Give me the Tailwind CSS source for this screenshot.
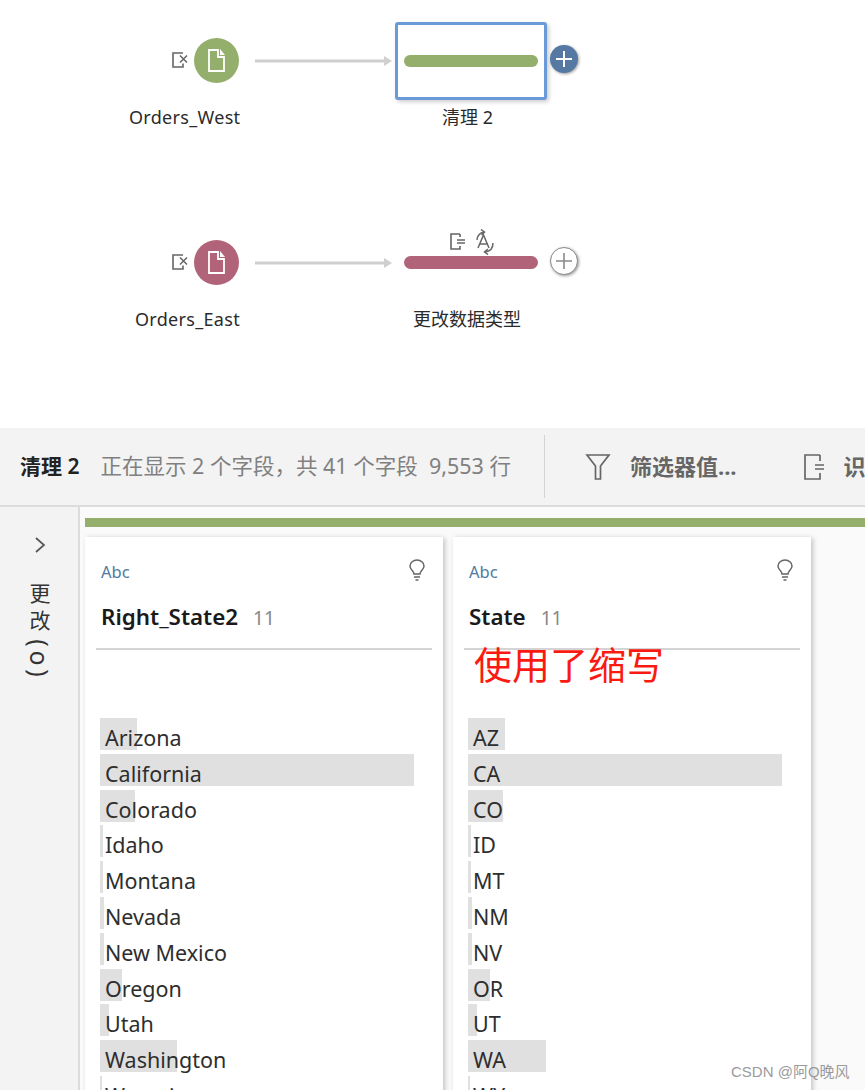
<!DOCTYPE html>
<html lang="zh">
<head>
<meta charset="utf-8">
<script src="https://cdn.jsdelivr.net/npm/@tailwindcss/browser@4"></script>
</head>
<body class="m-0 bg-white">
<div class="w-[865px] h-[1090px] overflow-hidden relative flex flex-col text-[#2b2b2b] font-['Noto_Sans','Noto_Sans_CJK_SC',sans-serif]">

  <!-- flow canvas -->
  <div class="relative h-[428px] shrink-0 bg-white">
    <svg class="absolute left-[170px] top-[50px] w-[20px] h-[20px]" viewBox="0 0 20 20" fill="none" stroke="#666" stroke-width="1.600"><path d="M13 3H3v14h10v-3.500"/><path d="M10 5.500l7 7M17 5.500l-7 7" stroke-width="1.500"/></svg>
    <div class="absolute left-[194px] top-[38px] w-[45px] h-[45px] rounded-full bg-[#94ae6c] flex items-center justify-center">
      <svg class="w-[19px] h-[25px]" viewBox="0 0 19 25" fill="none" stroke="#fff" stroke-width="1.800"><path d="M2 2h9v7h6v14H2z"/><path d="M13 1l5 6h-5z" fill="#fff" stroke="none"/></svg>
    </div>
    <svg class="absolute left-[255px] top-[54px] w-[138px] h-[14px]" viewBox="0 0 138 14"><path d="M0 7h130" stroke="#cfcfcf" stroke-width="3"/><path d="M129 2l8 5-8 5z" fill="#cfcfcf"/></svg>
    <div class="absolute left-[395px] top-[22px] w-[152px] h-[78px] border-[3px] border-[#6a9bd8] rounded-[3px] bg-white shadow-[2px_2px_4px_rgba(0,0,0,0.2)] flex items-center justify-center">
      <div class="w-[134px] h-[12px] rounded-full bg-[#94ae6c]"></div>
    </div>
    <div class="absolute left-[550px] top-[45px] w-[28px] h-[28px] rounded-full bg-[#5579a3] shadow-[1px_1px_3px_rgba(0,0,0,0.4)] flex items-center justify-center">
      <svg class="w-[18px] h-[18px]" viewBox="0 0 18 18" stroke="#fff" stroke-width="2"><path d="M9 1v16M1 9h16"/></svg>
    </div>
    <div class="absolute left-[129px] top-[105px] text-[18px] leading-[24px] whitespace-nowrap tracking-[0.3px]">Orders_West</div>
    <div class="absolute left-[442px] top-[105px] text-[18px] leading-[24px] whitespace-nowrap">清理 2</div>

    <svg class="absolute left-[170px] top-[252px] w-[20px] h-[20px]" viewBox="0 0 20 20" fill="none" stroke="#666" stroke-width="1.600"><path d="M13 3H3v14h10v-3.500"/><path d="M10 5.500l7 7M17 5.500l-7 7" stroke-width="1.500"/></svg>
    <div class="absolute left-[194px] top-[240px] w-[45px] h-[45px] rounded-full bg-[#b16379] flex items-center justify-center">
      <svg class="w-[19px] h-[25px]" viewBox="0 0 19 25" fill="none" stroke="#fff" stroke-width="1.800"><path d="M2 2h9v7h6v14H2z"/><path d="M13 1l5 6h-5z" fill="#fff" stroke="none"/></svg>
    </div>
    <svg class="absolute left-[255px] top-[256px] w-[138px] h-[14px]" viewBox="0 0 138 14"><path d="M0 7h130" stroke="#cfcfcf" stroke-width="3"/><path d="M129 2l8 5-8 5z" fill="#cfcfcf"/></svg>
    <svg class="absolute left-[449px] top-[232px] w-[18px] h-[20px]" viewBox="0 0 18 20" fill="none" stroke="#666" stroke-width="1.600"><path d="M11 2H2v15h9v-3M11 2v3"/><path d="M8 8h8M8 11h8" stroke-width="1.400"/></svg>
    <svg class="absolute left-[474px] top-[229px] w-[22px] h-[26px]" viewBox="0 0 22 26" fill="none" stroke="#666" stroke-width="1.500"><path d="M4 19L9.500 6 15 19M6 15h7"/><path d="M3 11c0-4 3-7.500 7-8M7 0.500L10.500 3 7.500 6"/><path d="M19 14c0 5-3 8.500-8 9M14 20l-3.500 3 3.500 2.500"/></svg>
    <div class="absolute left-[404px] top-[256px] w-[134px] h-[13px] rounded-full bg-[#b16379]"></div>
    <div class="absolute left-[550px] top-[247px] w-[28px] h-[28px] rounded-full bg-white border border-[#8a8a8a] shadow-[1px_1px_3px_rgba(0,0,0,0.4)] flex items-center justify-center">
      <svg class="w-[18px] h-[18px]" viewBox="0 0 18 18" stroke="#8a8a8a" stroke-width="1.600"><path d="M9 1v16M1 9h16"/></svg>
    </div>
    <div class="absolute left-[135px] top-[307px] text-[18px] leading-[24px] whitespace-nowrap tracking-[0.3px]">Orders_East</div>
    <div class="absolute left-[413px] top-[307px] text-[18px] leading-[24px] whitespace-nowrap">更改数据类型</div>
  </div>

  <!-- toolbar -->
  <div class="h-[79px] shrink-0 bg-[#f3f3f3] border-b-2 border-[#dcdcdc] flex items-center pl-[20px] whitespace-nowrap overflow-hidden">
    <span class="text-[21px] font-semibold text-[#222]">清理 2</span>
    <span class="ml-[21px] text-[21.500px] text-[#808080]">正在显示 2 个字段，共 41 个字段&nbsp; 9,553 行</span>
    <div class="ml-[33px] w-px h-[63px] bg-[#d4d4d4] shrink-0"></div>
    <svg class="ml-[40px] w-[26px] h-[28px] shrink-0" viewBox="0 0 26 28" fill="none" stroke="#666" stroke-width="1.700"><path d="M2 2h22l-8.500 11v13h-5V13z"/></svg>
    <span class="ml-[19px] text-[22px] font-bold text-[#666]">筛选器值...</span>
    <svg class="ml-[66px] w-[24px] h-[28px] shrink-0" viewBox="0 0 24 28" fill="none" stroke="#666" stroke-width="1.700"><path d="M17 2H2v24h15v-6M17 2v6"/><path d="M12 12h9M12 16h9"/></svg>
    <span class="ml-[17px] text-[22px] font-bold text-[#666]">识别字段</span>
  </div>

  <!-- body -->
  <div class="flex flex-1 min-h-0">
    <div class="w-[80px] shrink-0 bg-[#f3f3f3] border-r-2 border-[#dcdcdc] flex flex-col items-center pt-[29px] pl-[2px]">
      <svg class="w-[12px] h-[18px]" viewBox="0 0 12 18" fill="none" stroke="#555" stroke-width="1.700"><path d="M2 2l8 7-8 7"/></svg>
      <div class="mt-[26px] flex flex-col items-center text-[21px] leading-[27px] text-[#333]">
        <span>更</span><span>改</span>
        <span class="rotate-90 text-[25px] leading-[14px] mt-[2px]">(</span>
        <span class="rotate-90 text-[25px] leading-[16px]">o</span>
        <span class="rotate-90 text-[25px] leading-[14px]">)</span>
      </div>
    </div>
    <div class="flex-1 bg-[#fafafa] pl-[5px] pt-[11px] min-w-0">
      <div class="h-[9px] bg-[#94ae6c]"></div>
      <div class="flex gap-[10px] mt-[10px]">

        <div class="w-[358px] h-[560px] shrink-0 bg-white shadow-[2px_1px_5px_rgba(0,0,0,0.22)]">
          <div class="h-[113px] mx-[11px] border-b-2 border-[#d4d4d4] relative">
            <div class="pl-[5px] pt-[25px] text-[16.500px] leading-[20px] text-[#4f7aa0]">Abc</div>
            <div class="pl-[5px] pt-[21px] flex items-baseline">
              <span class="text-[22.400px] leading-[28px] font-semibold text-[#1a1a1a]">Right_State2</span>
              <span class="ml-[15px] text-[19px] text-[#888]">11</span>
            </div>
            <svg class="absolute right-[7px] top-[22px] w-[16px] h-[23px]" viewBox="0 0 16 23" fill="none" stroke="#666" stroke-width="1.500"><path d="M5 15c0-3-4-4-4-8a7 6 0 0 1 14 0c0 4-4 5-4 8z"/><path d="M5 18h6M6.500 21h3"/></svg>
          </div>
          <div class="pt-[68px] pl-[15px] text-[21.500px] text-[#2e2e2e]">
            <div class="relative h-[32px] mb-[3.800px]"><div class="absolute left-0 top-0 h-full w-[37px] bg-[#e0e0e0]"></div><span class="absolute left-[5px] top-[5px] leading-[30px]">Arizona</span></div>
            <div class="relative h-[32px] mb-[3.800px]"><div class="absolute left-0 top-0 h-full w-[314px] bg-[#e0e0e0]"></div><span class="absolute left-[5px] top-[5px] leading-[30px]">California</span></div>
            <div class="relative h-[32px] mb-[3.800px]"><div class="absolute left-0 top-0 h-full w-[35px] bg-[#e0e0e0]"></div><span class="absolute left-[5px] top-[5px] leading-[30px]">Colorado</span></div>
            <div class="relative h-[32px] mb-[3.800px]"><div class="absolute left-0 top-0 h-full w-[3px] bg-[#e0e0e0]"></div><span class="absolute left-[5px] top-[5px] leading-[30px]">Idaho</span></div>
            <div class="relative h-[32px] mb-[3.800px]"><div class="absolute left-0 top-0 h-full w-[3px] bg-[#e0e0e0]"></div><span class="absolute left-[5px] top-[5px] leading-[30px]">Montana</span></div>
            <div class="relative h-[32px] mb-[3.800px]"><div class="absolute left-0 top-0 h-full w-[4px] bg-[#e0e0e0]"></div><span class="absolute left-[5px] top-[5px] leading-[30px]">Nevada</span></div>
            <div class="relative h-[32px] mb-[3.800px]"><div class="absolute left-0 top-0 h-full w-[4px] bg-[#e0e0e0]"></div><span class="absolute left-[5px] top-[5px] leading-[30px]">New Mexico</span></div>
            <div class="relative h-[32px] mb-[3.800px]"><div class="absolute left-0 top-0 h-full w-[22px] bg-[#e0e0e0]"></div><span class="absolute left-[5px] top-[5px] leading-[30px]">Oregon</span></div>
            <div class="relative h-[32px] mb-[3.800px]"><div class="absolute left-0 top-0 h-full w-[9px] bg-[#e0e0e0]"></div><span class="absolute left-[5px] top-[5px] leading-[30px]">Utah</span></div>
            <div class="relative h-[32px] mb-[3.800px]"><div class="absolute left-0 top-0 h-full w-[77px] bg-[#e0e0e0]"></div><span class="absolute left-[5px] top-[5px] leading-[30px]">Washington</span></div>
            <div class="relative h-[32px] mb-[3.800px]"><div class="absolute left-0 top-0 h-full w-[2px] bg-[#e0e0e0]"></div><span class="absolute left-[5px] top-[5px] leading-[30px]">Wyoming</span></div>
          </div>
        </div>

        <div class="w-[358px] h-[560px] shrink-0 bg-white shadow-[2px_1px_5px_rgba(0,0,0,0.22)] relative">
          <div class="h-[113px] mx-[11px] border-b-2 border-[#d4d4d4] relative">
            <div class="pl-[5px] pt-[25px] text-[16.500px] leading-[20px] text-[#4f7aa0]">Abc</div>
            <div class="pl-[5px] pt-[21px] flex items-baseline">
              <span class="text-[22.400px] leading-[28px] font-semibold text-[#1a1a1a]">State</span>
              <span class="ml-[15px] text-[19px] text-[#888]">11</span>
            </div>
            <svg class="absolute right-[7px] top-[22px] w-[16px] h-[23px]" viewBox="0 0 16 23" fill="none" stroke="#666" stroke-width="1.500"><path d="M5 15c0-3-4-4-4-8a7 6 0 0 1 14 0c0 4-4 5-4 8z"/><path d="M5 18h6M6.500 21h3"/></svg>
          </div>
          <div class="absolute left-[21px] top-[101px] text-[38px] leading-[50px] text-[#fb1a12] font-['Noto_Sans_CJK_SC',sans-serif] whitespace-nowrap">使用了缩写</div>
          <div class="pt-[68px] pl-[15px] text-[21.500px] text-[#2e2e2e]">
            <div class="relative h-[32px] mb-[3.800px]"><div class="absolute left-0 top-0 h-full w-[37px] bg-[#e0e0e0]"></div><span class="absolute left-[5px] top-[5px] leading-[30px]">AZ</span></div>
            <div class="relative h-[32px] mb-[3.800px]"><div class="absolute left-0 top-0 h-full w-[314px] bg-[#e0e0e0]"></div><span class="absolute left-[5px] top-[5px] leading-[30px]">CA</span></div>
            <div class="relative h-[32px] mb-[3.800px]"><div class="absolute left-0 top-0 h-full w-[35px] bg-[#e0e0e0]"></div><span class="absolute left-[5px] top-[5px] leading-[30px]">CO</span></div>
            <div class="relative h-[32px] mb-[3.800px]"><div class="absolute left-0 top-0 h-full w-[3px] bg-[#e0e0e0]"></div><span class="absolute left-[5px] top-[5px] leading-[30px]">ID</span></div>
            <div class="relative h-[32px] mb-[3.800px]"><div class="absolute left-0 top-0 h-full w-[3px] bg-[#e0e0e0]"></div><span class="absolute left-[5px] top-[5px] leading-[30px]">MT</span></div>
            <div class="relative h-[32px] mb-[3.800px]"><div class="absolute left-0 top-0 h-full w-[4px] bg-[#e0e0e0]"></div><span class="absolute left-[5px] top-[5px] leading-[30px]">NM</span></div>
            <div class="relative h-[32px] mb-[3.800px]"><div class="absolute left-0 top-0 h-full w-[4px] bg-[#e0e0e0]"></div><span class="absolute left-[5px] top-[5px] leading-[30px]">NV</span></div>
            <div class="relative h-[32px] mb-[3.800px]"><div class="absolute left-0 top-0 h-full w-[22px] bg-[#e0e0e0]"></div><span class="absolute left-[5px] top-[5px] leading-[30px]">OR</span></div>
            <div class="relative h-[32px] mb-[3.800px]"><div class="absolute left-0 top-0 h-full w-[9px] bg-[#e0e0e0]"></div><span class="absolute left-[5px] top-[5px] leading-[30px]">UT</span></div>
            <div class="relative h-[32px] mb-[3.800px]"><div class="absolute left-0 top-0 h-full w-[78px] bg-[#e0e0e0]"></div><span class="absolute left-[5px] top-[5px] leading-[30px]">WA</span></div>
            <div class="relative h-[32px] mb-[3.800px]"><div class="absolute left-0 top-0 h-full w-[2px] bg-[#e0e0e0]"></div><span class="absolute left-[5px] top-[5px] leading-[30px]">WY</span></div>
          </div>
        </div>
      </div>
    </div>
  </div>
  <div class="absolute left-[731px] top-[1063px] text-[15px] leading-[18px] text-[#9a9a9a] whitespace-nowrap font-['Liberation_Sans','Noto_Sans_CJK_SC',sans-serif]">CSDN @阿Q晚风</div>
</div>
</body>
</html>
